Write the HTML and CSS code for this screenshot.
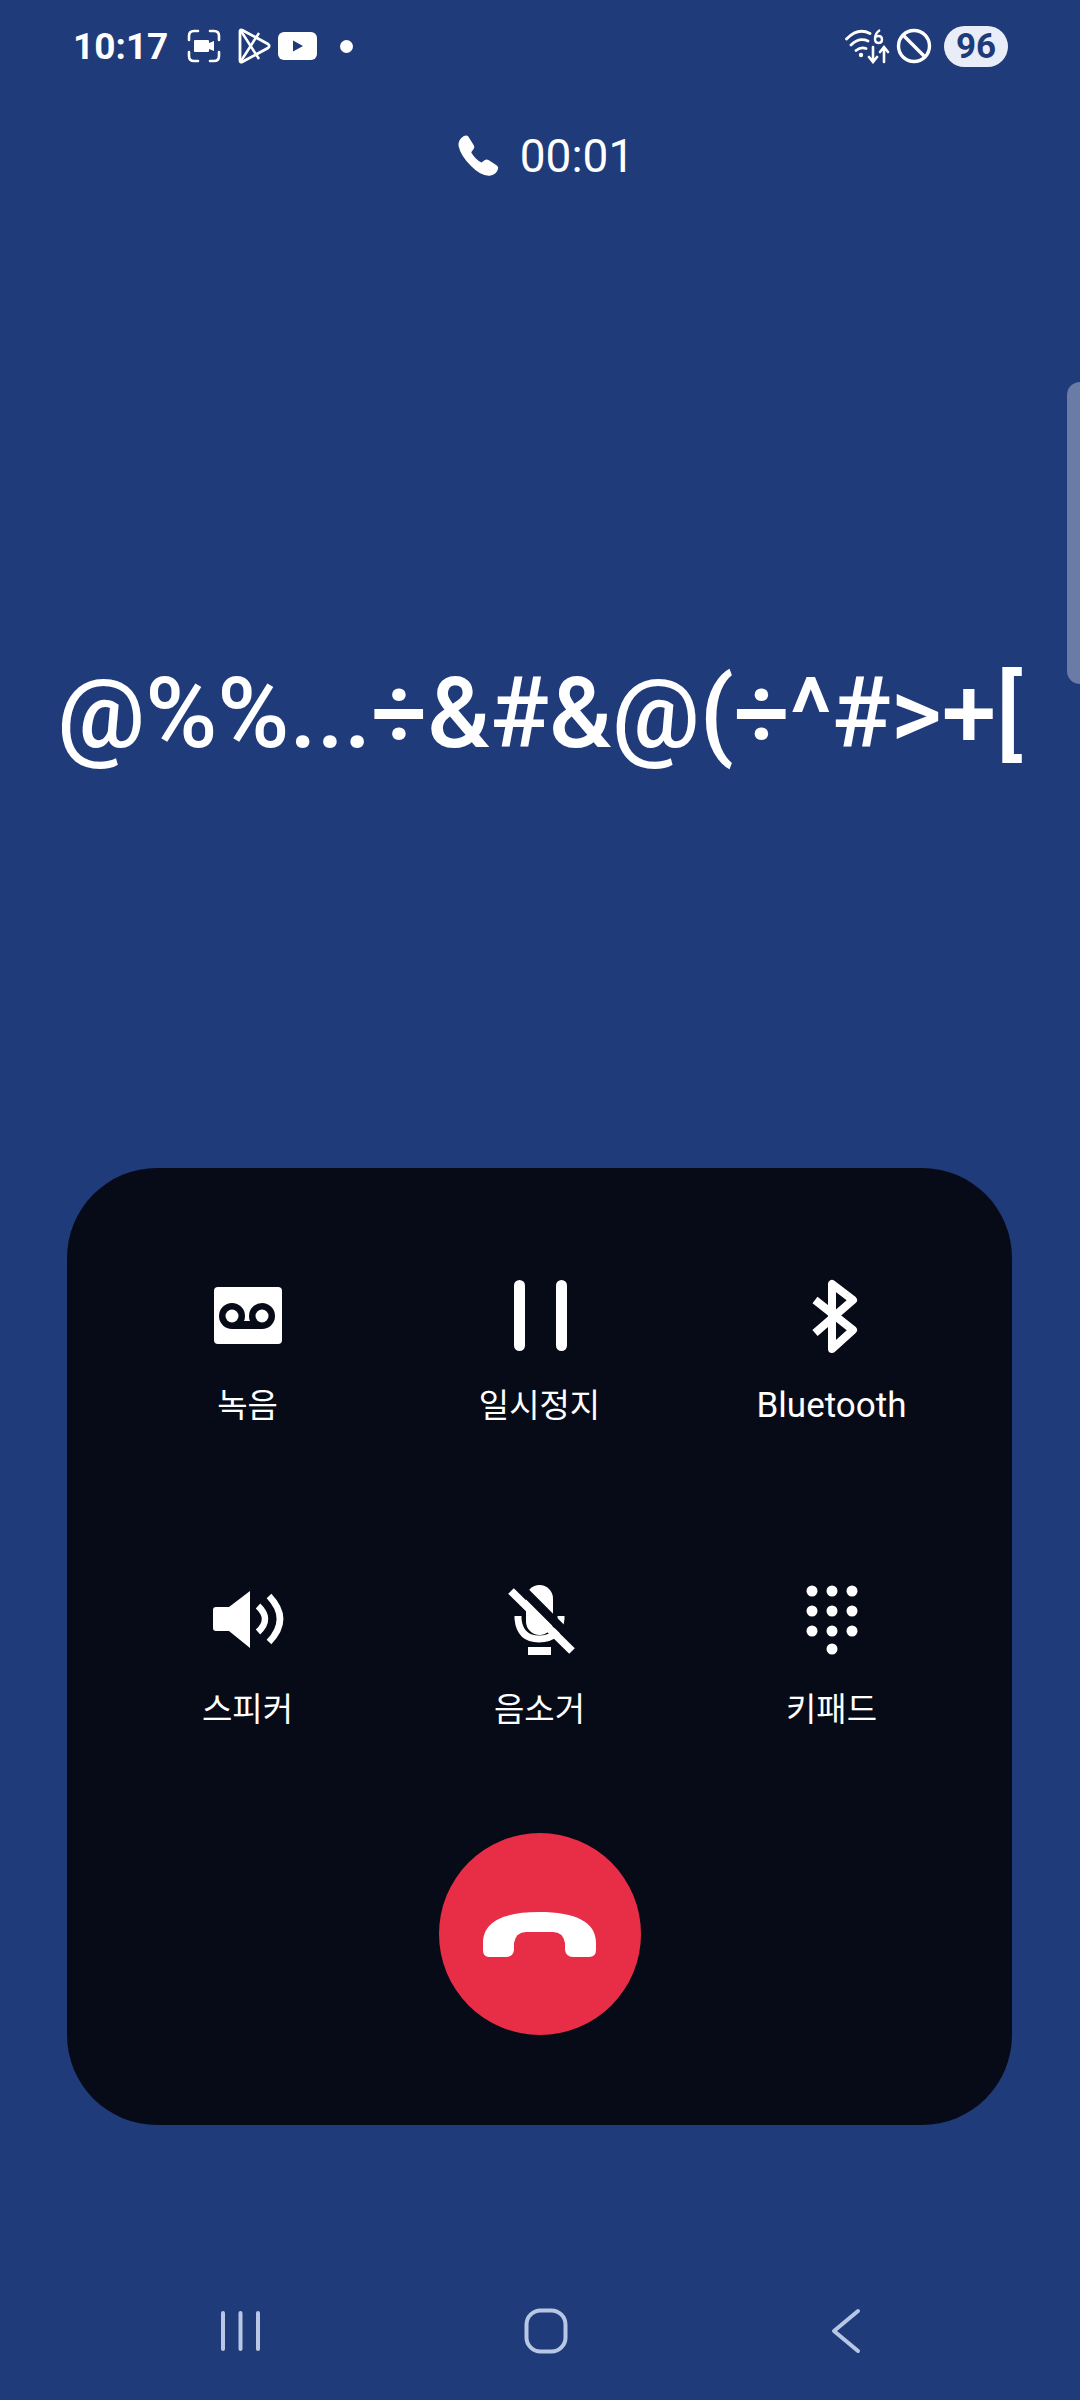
FILE: index.html
```html
<!doctype html>
<html lang="ko">
<head>
	<meta charset="UTF-8">
	<title>통화 중</title>
	<link rel="stylesheet" href="styles.css">
</head>
<body>
	<div class="page">
		<!-- status bar -->
		<div class="status">
			<span class="clock">10:17</span>
			<svg class="st-rec" width="34" height="34" viewBox="0 0 34 34"><path d="M2 11V7q0-5 5-5h4M23 2h4q5 0 5 5v4M32 23v4q0 5-5 5h-4M11 32H7q-5 0-5-5v-4" fill="none" stroke="#fff" stroke-width="2.6" stroke-linecap="round"/><path d="M7 12q0-1 1-1h13q1 0 1 1v2l5-2v10l-5-2v2q0 1-1 1H8q-1 0-1-1z" fill="#fff"/></svg>
			<svg class="st-play" width="34" height="36" viewBox="0 0 34 36"><path d="M3 3.500Q3 1 5.500 2.200L31 16q2.500 2 0 4L5.500 33.800Q3 35 3 32.500z" fill="none" stroke="#fff" stroke-width="2.800" stroke-linejoin="round"/><path d="M4 3l18 28M4 33L22 5" stroke="#fff" stroke-width="2.500" fill="none"/></svg>
			<svg class="st-yt" width="39" height="28" viewBox="0 0 39 28"><rect width="39" height="28" rx="6" fill="#fff"/><path d="M15 8.500l10 5.500-10 5.500z" fill="#1f3a78"/></svg>
			<span class="st-dot"></span>
			<span class="st-gap"></span>
			<svg class="st-wifi" width="46" height="36" viewBox="0 0 46 36"><path d="M1.500 11Q13-1 25 5.500M6 17q8-8 17-4M11 22.500q5-4 10-2" fill="none" stroke="#fff" stroke-width="2.800" stroke-linecap="round"/><circle cx="16" cy="27" r="2.200" fill="#fff"/><path d="M28 19v14m-4-4l4 5 4-5M39 34V20m-4 4l4-5 4 5" fill="none" stroke="#fff" stroke-width="2.600" stroke-linecap="round"/><path d="M35 2q-5 3-5 9 0 4 3.500 4t3.500-3.500-3.500-3.500-3.500 2.500" fill="none" stroke="#fff" stroke-width="2.400"/></svg>
			<svg class="st-block" width="36" height="36" viewBox="0 0 36 36"><circle cx="18" cy="18" r="15.500" fill="none" stroke="#fff" stroke-width="3.400"/><path d="M7 7l22 22" stroke="#fff" stroke-width="3.400"/></svg>
			<span class="battery">96</span>
		</div>

		<div class="timer">
			<svg width="44" height="44" viewBox="0 0 24 24"><path d="M6.800 1.500l2.900 4.600q.7 1.100-.1 2.100L8.300 9.900q1.800 3.500 5.600 5.700l1.700-1.300q1-.8 2.100-.1l4.600 3q1.100.8.600 2-1.100 2.900-4 3.500-4.900.8-10.700-5.200Q2.400 11.500 1.400 6.500 1 3 4.300 1.100q1.700-.7 2.500.4z" fill="#fff"/></svg>
			<span>00:01</span>
		</div>

		<div class="name">@%%...÷&amp;#&amp;@(÷^#&gt;+[</div>

		<div class="panel">
			<div class="actions">
				<div class="action">
					<svg class="ico" width="80" height="80" viewBox="0 0 80 80"><rect x="6" y="12" width="68" height="57" rx="4" fill="#fff"/><circle cx="24" cy="41" r="13" fill="#070b18"/><circle cx="54" cy="41" r="13" fill="#070b18"/><rect x="24" y="46" width="30" height="8" fill="#070b18"/><circle cx="24" cy="41" r="6.500" fill="#fff"/><circle cx="54" cy="41" r="6.500" fill="#fff"/></svg>
					<span>녹음</span>
				</div>
				<div class="action">
					<svg class="ico" width="80" height="80" viewBox="0 0 80 80"><rect x="14" y="5" width="11" height="71" rx="5.500" fill="#fff"/><rect x="56" y="5" width="11" height="71" rx="5.500" fill="#fff"/></svg>
					<span>일시정지</span>
				</div>
				<div class="action">
					<svg class="ico" width="80" height="80" viewBox="0 0 80 80"><path d="M23 58L61 25 40 9V74L61 55 23 25" fill="none" stroke="#fff" stroke-width="8" stroke-linejoin="round"/></svg>
					<span class="latin">Bluetooth</span>
				</div>
				<div class="action">
					<svg class="ico" width="80" height="80" viewBox="0 0 80 80"><path d="M5 31q0-3 3-3h13l21-16v57L21 52H8q-3 0-3-3z" fill="#fff"/><path d="M50 27Q64 40 50 53M61 17Q83 40 61 63" fill="none" stroke="#fff" stroke-width="6.500"/></svg>
					<span>스피커</span>
				</div>
				<div class="action">
					<svg class="ico" width="80" height="80" viewBox="0 0 80 80"><rect x="26" y="6" width="27" height="50" rx="13.500" fill="#fff"/><path d="M18 37v3q2 20 21 20 20 0 22-20v-3" fill="none" stroke="#fff" stroke-width="7"/><rect x="28" y="68" width="23" height="8" fill="#fff"/><path d="M17 5l60 60" stroke="#070b18" stroke-width="9"/><path d="M11 12l61 60" stroke="#fff" stroke-width="8"/></svg>
					<span>음소거</span>
				</div>
				<div class="action">
					<svg class="ico" width="80" height="80" viewBox="0 0 80 80" fill="#fff"><circle cx="20" cy="12" r="5.500"/><circle cx="40" cy="12" r="5.500"/><circle cx="60" cy="12" r="5.500"/><circle cx="20" cy="32" r="5.500"/><circle cx="40" cy="32" r="5.500"/><circle cx="60" cy="32" r="5.500"/><circle cx="20" cy="52" r="5.500"/><circle cx="40" cy="52" r="5.500"/><circle cx="60" cy="52" r="5.500"/><circle cx="40" cy="70" r="5.500"/></svg>
					<span>키패드</span>
				</div>
			</div>
			<div class="hangup">
				<svg width="113" height="45" viewBox="0 0 113 45"><path d="M6 45Q0 45 0 38V31C0 10 20 0 56 0 93 0 113 10 113 31V38Q113 45 106 45H90Q83 45 82 38V31Q80 20 70 20H43Q33 20 31 31V38Q30 45 23 45Z" fill="#fff"/></svg>
			</div>
		</div>

		<!-- nav bar -->
		<div class="nav">
			<svg width="41" height="42" viewBox="0 0 41 42"><path d="M3 3v36M20.500 3v36M38 3v36" stroke="#b7c7e4" stroke-width="4" stroke-linecap="round"/></svg>
			<svg class="nav-home" width="44" height="46" viewBox="0 0 44 46"><rect x="2.500" y="2.500" width="39" height="41" rx="14" fill="none" stroke="#b7c7e4" stroke-width="4"/></svg>
			<svg width="30" height="46" viewBox="0 0 30 46"><path d="M27 3L3 23l24 20" fill="none" stroke="#b7c7e4" stroke-width="4" stroke-linecap="round" stroke-linejoin="round"/></svg>
		</div>

		<div class="handle"></div>
	</div>
</body>
</html>
```

FILE: styles.css
```css
html, body {
	margin: 0;
	padding: 0;
}
body {
	background: #203b7a;
	color: #fff;
	font-family: Roboto, "Noto Sans CJK KR", sans-serif;
}
.page {
	position: relative;
	width: 1080px;
	height: 2400px;
	overflow: hidden;
	display: flex;
	flex-direction: column;
}

/* status bar */
.status {
	height: 92px;
	padding: 0 72px 0 73px;
	display: flex;
	align-items: center;
}
.clock {
	font-size: 37px;
	font-weight: 700;
	width: 114px;
}
.st-play { margin-left: 16px; }
.st-yt { margin-left: 7px; }
.st-dot {
	width: 13px;
	height: 13px;
	border-radius: 50%;
	background: #fff;
	margin-left: 23px;
}
.st-gap { flex: 1; }
.st-block { margin-left: 5px; }
.battery {
	width: 64px;
	height: 41px;
	line-height: 41px;
	border-radius: 21px;
	margin-left: 12px;
	background: #e8edf7;
	color: #1f3a78;
	font-size: 35px;
	font-weight: 700;
	text-align: center;
}

.timer {
	height: 60px;
	margin-top: 34px;
	padding-left: 10px;
	display: flex;
	align-items: center;
	justify-content: center;
	gap: 20px;
	font-size: 46px;
}

.name {
	margin-top: 468px;
	height: 120px;
	line-height: 120px;
	font-size: 98px;
	font-weight: 500;
	text-align: center;
	white-space: nowrap;
}

.panel {
	margin: 394px 68px 0 67px;
	height: 957px;
	box-sizing: border-box;
	padding-top: 107px;
	border-radius: 90px;
	background: #070b18;
	display: flex;
	flex-direction: column;
	align-items: center;
}
.actions {
	display: grid;
	grid-template-columns: repeat(3, 292px);
	row-gap: 151px;
}
.action {
	display: flex;
	flex-direction: column;
	align-items: center;
	font-size: 33px;
	line-height: 44px;
}
.latin { font-size: 35px; }
.ico {
	display: block;
	margin-bottom: 29px;
}
.hangup {
	width: 202px;
	height: 202px;
	margin-top: 101px;
	border-radius: 50%;
	background: #e72e46;
	display: flex;
	align-items: center;
	justify-content: center;
}

.nav {
	margin-top: 183px;
	padding: 0 219px 0 220px;
	display: flex;
	align-items: center;
	justify-content: space-between;
}
.nav-home { margin-left: 0; }

.handle {
	position: absolute;
	right: 0;
	top: 382px;
	width: 13px;
	height: 302px;
	border-radius: 13px 0 0 13px;
	background: #6a7ba8;
}
```
